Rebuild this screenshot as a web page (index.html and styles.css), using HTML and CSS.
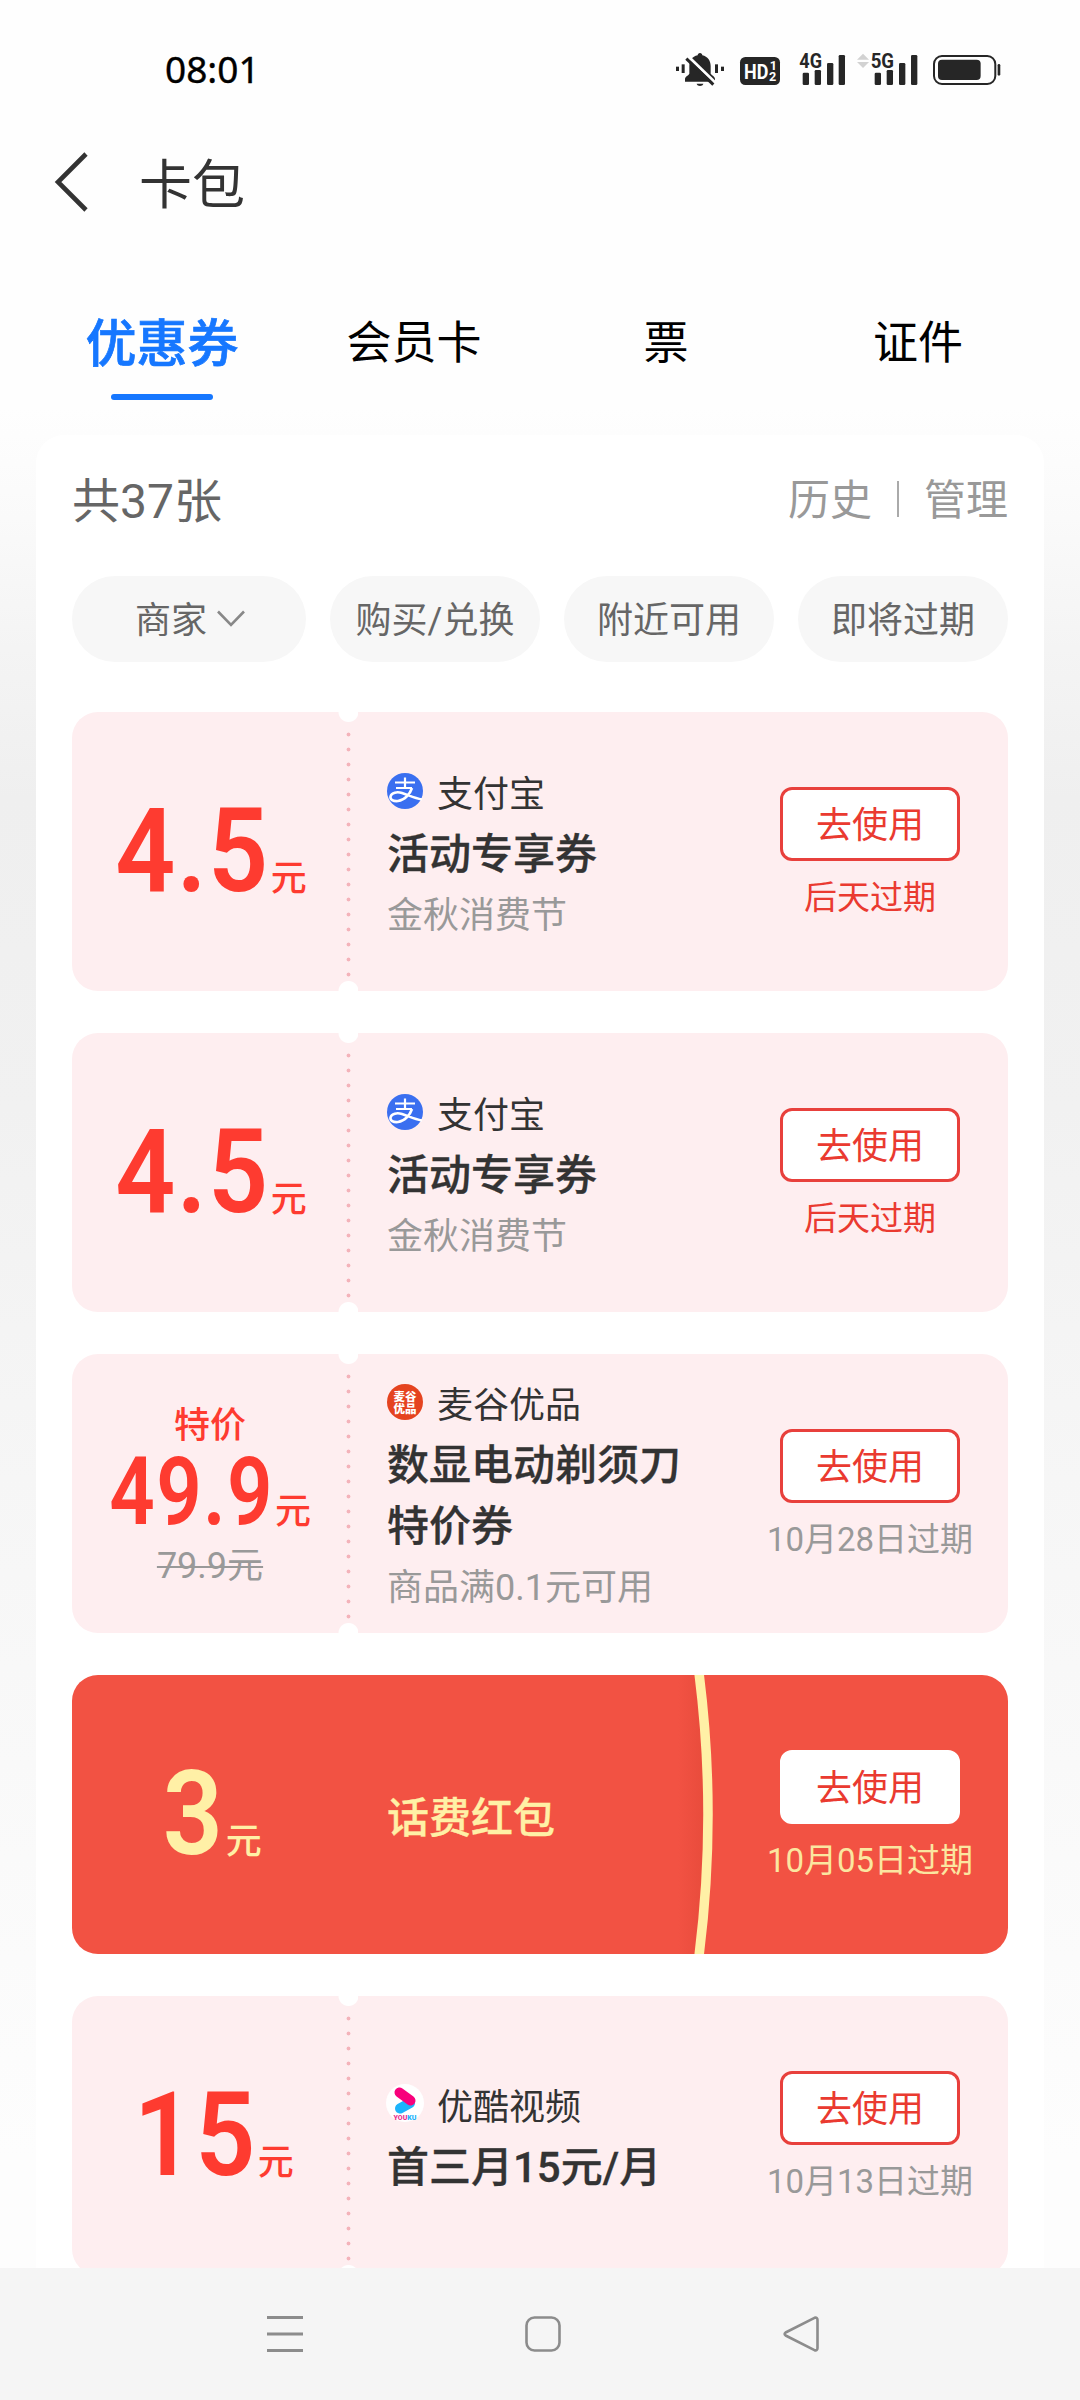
FILE: index.html
```html
<!DOCTYPE html>
<html lang="zh-CN">
<head>
<meta charset="utf-8">
<title>卡包</title>
<link rel="stylesheet" href="styles.css">
</head>
<body>
<div class="screen">
  <header class="top">
    <div class="status">
      <span class="time">08:01</span>
      <div class="status-icons">
        <svg class="ic-bell" viewBox="108 60 144 108" width="48" height="36">
          <g fill="#262626">
            <path d="M180 66c4 0 7 3 7 7 16 4 25 16 25 32v23c4 5 12 8 13 15v9H135v-9c1-7 11-10 13-15v-23c0-16 8-28 25-32 0-4 3-7 7-7z"/>
            <path d="M170 158h20c-2 9-18 9-20 0z"/>
            <rect x="108" y="107" width="9" height="13"/><rect x="125" y="100" width="9" height="26"/>
            <rect x="225" y="100" width="9" height="26"/><rect x="243" y="107" width="9" height="13"/>
          </g>
          <path d="M145 77l82 79" stroke="#fff" stroke-width="9"/>
          <path d="M139 83l81 78" stroke="#262626" stroke-width="9"/>
        </svg>
        <svg class="ic-hd" viewBox="300 60 120 108" width="40" height="36">
          <rect x="300" y="78" width="120" height="84" rx="16" fill="#262626"/>
          <g fill="#fff" font-family="Roboto, sans-serif" font-weight="700">
            <text x="312" y="143" font-size="63" textLength="73" lengthAdjust="spacingAndGlyphs">HD</text>
            <text x="389" y="118" font-size="38">1</text>
            <text x="387" y="151" font-size="38">2</text>
          </g>
        </svg>
        <svg class="ic-4g" viewBox="476 60 140 108" width="46.7" height="36">
          <g fill="#262626">
            <rect x="487" y="125" width="19" height="37" rx="4"/><rect x="523" y="117" width="19" height="45" rx="4"/>
            <rect x="560" y="96" width="19" height="66" rx="4"/><rect x="595" y="72" width="19" height="90" rx="4"/>
            <text x="477" y="110" font-size="60" font-family="Roboto, sans-serif" font-weight="700" textLength="68" lengthAdjust="spacingAndGlyphs">4G</text>
          </g>
        </svg>
        <svg class="ic-5g" viewBox="650 60 182 108" width="60.7" height="36">
          <path d="M650 86l18-18 18 18zM650 93l18 18 18-18z" fill="#d2d2d2"/>
          <g fill="#262626">
            <rect x="703" y="125" width="19" height="37" rx="4"/><rect x="739" y="117" width="19" height="45" rx="4"/>
            <rect x="776" y="96" width="19" height="66" rx="4"/><rect x="812" y="72" width="19" height="90" rx="4"/>
            <text x="691" y="110" font-size="60" font-family="Roboto, sans-serif" font-weight="700" textLength="70" lengthAdjust="spacingAndGlyphs">5G</text>
          </g>
        </svg>
        <svg class="ic-bat" viewBox="878 60 202 108" width="67.3" height="36">
          <rect x="881" y="75" width="184" height="84" rx="24" fill="none" stroke="#262626" stroke-width="6"/>
          <rect x="893" y="86" width="128" height="61" rx="12" fill="#262626"/>
          <rect x="1072" y="99" width="8" height="35" rx="4" fill="#262626"/>
        </svg>
      </div>
    </div>
    <div class="titlebar">
      <svg class="back" viewBox="0 0 34 58" width="34" height="58"><path d="M32 1L4 29l28 28" fill="none" stroke="#333" stroke-width="4.6"/></svg>
      <h1>卡包</h1>
    </div>
    <nav class="tabs">
      <a class="tab active">优惠券</a>
      <a class="tab">会员卡</a>
      <a class="tab">票</a>
      <a class="tab">证件</a>
    </nav>
  </header>

  <main class="content">
    <section class="panel">
      <div class="panel-head">
        <span class="count">共37张</span>
        <div class="links"><a>历史</a><i></i><a>管理</a></div>
      </div>
      <div class="filters">
        <span class="pill wide">商家<svg viewBox="0 0 28 18" width="28" height="18"><path d="M1 1.5l13 13.5 13-13.5" fill="none" stroke="#888" stroke-width="2.6"/></svg></span>
        <span class="pill">购买/兑换</span>
        <span class="pill">附近可用</span>
        <span class="pill">即将过期</span>
      </div>

      <div class="coupons">
        <article class="coupon">
          <div class="price"><div class="amount"><b class="n3">4.5</b><span>元</span></div></div>
          <div class="perf"></div>
          <div class="info">
            <div class="shop">
              <svg class="logo" viewBox="0 0 36 36" width="36" height="36">
                <circle cx="18" cy="18" r="18" fill="#3a6ff0"/>
                <g fill="none" stroke="#fff" stroke-width="2.2">
                  <path d="M8 9.500h20M18 4.500v10.500M9 15h16"/>
                  <path d="M25 15c-2 6-7 12-14 13-5 .5-8-1.500-7.500-4.500C4.500 19.500 10 18.500 15 20c6 1.800 12 5 20 6.500" stroke-width="2.600"/>
                </g>
              </svg>支付宝</div>
            <h2>活动专享券</h2>
            <p>金秋消费节</p>
          </div>
          <div class="action"><a class="btn">去使用</a><span class="due soon">后天过期</span></div>
        </article>

        <article class="coupon">
          <div class="price"><div class="amount"><b class="n3">4.5</b><span>元</span></div></div>
          <div class="perf"></div>
          <div class="info">
            <div class="shop">
              <svg class="logo" viewBox="0 0 36 36" width="36" height="36">
                <circle cx="18" cy="18" r="18" fill="#3a6ff0"/>
                <g fill="none" stroke="#fff" stroke-width="2.2">
                  <path d="M8 9.500h20M18 4.500v10.500M9 15h16"/>
                  <path d="M25 15c-2 6-7 12-14 13-5 .5-8-1.500-7.500-4.500C4.500 19.500 10 18.500 15 20c6 1.800 12 5 20 6.500" stroke-width="2.600"/>
                </g>
              </svg>支付宝</div>
            <h2>活动专享券</h2>
            <p>金秋消费节</p>
          </div>
          <div class="action"><a class="btn">去使用</a><span class="due soon">后天过期</span></div>
        </article>

        <article class="coupon">
          <div class="price special">
            <span class="tag">特价</span>
            <div class="amount"><b>49.9</b><span>元</span></div>
            <del>79.9元</del>
          </div>
          <div class="perf"></div>
          <div class="info">
            <div class="shop">
              <svg class="logo" viewBox="0 0 36 36" width="36" height="36">
                <circle cx="18" cy="18" r="18" fill="#e5431f"/>
                <g fill="#fff" font-family="'Noto Sans CJK SC', sans-serif" font-weight="900" font-size="11.5">
                  <text x="6.500" y="17">麦谷</text><text x="6.500" y="29">优品</text>
                </g>
              </svg>麦谷优品</div>
            <h2>数显电动剃须刀<br>特价券</h2>
            <p>商品满0.1元可用</p>
          </div>
          <div class="action"><a class="btn">去使用</a><span class="due">10月28日过期</span></div>
        </article>

        <article class="coupon packet">
          <svg class="arc" viewBox="0 0 80 279" width="80" height="279">
            <defs><linearGradient id="shade"><stop offset="0" stop-color="#d8402f" stop-opacity="0"/><stop offset="1" stop-color="#d8402f" stop-opacity=".35"/></linearGradient></defs>
            <path d="M34 0H50Q68 139.500 50 279H34z" fill="url(#shade)"/>
            <path d="M55 -2Q73 139.500 55 281" fill="none" stroke="#fff0a6" stroke-width="9.500"/>
          </svg>
          <div class="price"><div class="amount"><b class="n1">3</b><span>元</span></div></div>
          <div class="perf"></div>
          <div class="info"><h2>话费红包</h2></div>
          <div class="action"><a class="btn">去使用</a><span class="due">10月05日过期</span></div>
        </article>

        <article class="coupon">
          <div class="price"><div class="amount"><b class="n2">15</b><span>元</span></div></div>
          <div class="perf"></div>
          <div class="info two-line">
            <div class="shop">
              <svg class="logo" viewBox="0 0 36 36" width="36" height="36">
                <circle cx="18" cy="17" r="19" fill="#fff"/>
                <path d="M13 22.500L23 17" stroke="#1cb4fb" stroke-width="10" stroke-linecap="round"/>
                <path d="M12.500 6.500L23.500 14.500" stroke="#f8017c" stroke-width="10" stroke-linecap="round"/>
                <text x="6.500" y="34" font-family="Roboto, sans-serif" font-size="7" font-weight="900" fill="#e8338f">YOU<tspan fill="#1cb4fb">KU</tspan></text>
              </svg>优酷视频</div>
            <h2>首三月15元/月</h2>
          </div>
          <div class="action"><a class="btn">去使用</a><span class="due">10月13日过期</span></div>
        </article>
      </div>
    </section>
  </main>

  <footer class="navbar">
    <svg viewBox="0 0 36 36" width="36" height="36"><path d="M0 1.500h36M0 18h36M0 34.500h36" stroke="#8c8c8c" stroke-width="3"/></svg>
    <svg viewBox="0 0 36 36" width="36" height="36"><rect x="1.500" y="1.500" width="33" height="33" rx="8" fill="none" stroke="#8c8c8c" stroke-width="2.600"/></svg>
    <svg viewBox="0 0 36 36" width="36" height="36"><path d="M31.500 1.800L2.600 16.500q-2 1.500 0 3L31.500 34.200q3 .8 3-2.200V4q0-3-3-2.200z" fill="none" stroke="#8c8c8c" stroke-width="2.600" stroke-linejoin="round"/></svg>
  </footer>
</div>
</body>
</html>
```
FILE: styles.css
```css
* { box-sizing: border-box; }
body {
  margin: 0;
  font-family: Roboto, "Noto Sans CJK SC", sans-serif;
  color: #333;
}
h1, h2, p { margin: 0; font-weight: 400; }
svg { display: block; flex: none; overflow: visible; }

.screen {
  width: 1080px;
  height: 2400px;
  display: flex;
  flex-direction: column;
  overflow: hidden;
  background: #fff;
}

/* header */
.top { height: 408px; flex: none; background: #fefefe; }
.status {
  height: 138px;
  padding: 0 80px 0 165px;
  display: flex;
  justify-content: space-between;
  align-items: center;
}
.time {
  font-family: "Noto Sans", Roboto, sans-serif;
  font-size: 37px;
  font-weight: 400;
  color: #000;
  padding-bottom: 2px;
  -webkit-text-stroke: .4px #000;
}
.status-icons { display: flex; align-items: center; padding-bottom: 1px; }
.ic-bell { margin-right: 16px; }
.ic-hd { margin-right: 18.700px; }
.ic-4g { margin-right: 11.300px; }
.ic-5g { margin-right: 15.300px; }

.titlebar {
  height: 88px;
  padding-left: 54px;
  display: flex;
  align-items: center;
  gap: 51px;
}
.titlebar h1 { font-size: 53px; line-height: 88px; padding-top: 8px; height: 96px; }

.tabs { display: flex; padding: 81px 36px 0; }
.tab {
  width: 252px;
  height: 100px;
  font-size: 45px;
  line-height: 73px;
  text-align: center;
  color: #000;
}
.tab.active {
  font-size: 51px;
  line-height: 75px;
  font-weight: 500;
  color: #1677ff;
  -webkit-text-stroke: .7px #1677ff;
}
.tab.active::after {
  content: "";
  display: block;
  width: 102px;
  height: 6px;
  margin: 12px auto 0;
  border-radius: 3px;
  background: #1677ff;
}

/* body */
.content {
  flex: 1;
  min-height: 0;
  overflow: hidden;
  padding: 27px 36px 0;
  background: linear-gradient(#fefefe 0, #fafafa 110px, #f4f4f4 240px, #efefef 390px, #f1f1f1 700px, #f6f6f6 1070px, #fafafa 1450px, #fdfdfd 1750px);
}
.panel {
  height: 2000px;
  padding: 0 36px;
  border-radius: 28px;
  background: #fff;
}
.panel-head {
  height: 128px;
  display: flex;
  align-items: center;
  justify-content: space-between;
}
.count { font-size: 48px; color: #666; padding-bottom: 5px; }
.links { display: flex; align-items: center; font-size: 42px; color: #999; }
.links a { padding-bottom: 5px; }
.links i { width: 2px; height: 36px; margin: 0 25px; background: #aaa; }

.filters { display: flex; gap: 24px; margin-top: 13px; }
.pill {
  flex: 1;
  height: 86px;
  padding-bottom: 5px;
  display: flex;
  align-items: center;
  justify-content: center;
  border-radius: 43px;
  font-size: 36px;
  white-space: nowrap;
  color: #666;
  background: #f7f7f7;
}
.pill.wide { flex: 0 0 234px; gap: 10px; padding-left: 2px; }
.pill.wide svg { margin-top: 5px; }

/* coupons */
.coupons { display: flex; flex-direction: column; gap: 42px; margin-top: 50px; }
.coupon {
  position: relative;
  height: 279px;
  display: flex;
  align-items: center;
  border-radius: 26px;
  overflow: hidden;
  background: #feeef0;
}
.price {
  width: 276px;
  padding-bottom: 2px;
  padding-left: 2px;
  display: flex;
  flex-direction: column;
  align-items: center;
  color: #fe3b30;
}
.amount { display: flex; align-items: baseline; }
.amount b {
  font-size: 117px;
  font-weight: 600;
  line-height: 120px;
  letter-spacing: 1.500px;
  transform: scaleX(.9);
  transform-origin: right;
}
/* the negative margin takes back the width lost to the horizontal scale */
.amount .n1 { margin-left: -4px; }
.amount .n2 { margin-left: -8px; }
.amount .n3 { margin-left: -17px; }
.amount span { font-size: 36px; font-weight: 500; line-height: 36px; margin-left: 1px; }

.price.special { padding: 12px 0 0; }
.special .amount b {
  font-size: 95px;
  line-height: 84px;
  margin-left: -31px;
  transform: scaleX(.84);
}
.special .tag { font-size: 36px; font-weight: 500; line-height: 48px; }
.special del { font-size: 36px; line-height: 64px; color: #999; text-decoration-thickness: 2px; }

/* perforation: two notches and a dotted line */
.perf {
  width: 20px;
  margin-left: -10px;
  align-self: stretch;
  background:
    radial-gradient(circle at 10.500px 0, #fff 9.500px, transparent 10.500px),
    radial-gradient(circle at 10.500px 279px, #fff 9.500px, transparent 10.500px),
    radial-gradient(circle at 10.500px 7.500px, #f4b3ba 1.500px, transparent 2.300px) 0 15px / 20px 15px repeat-y;
}
.info {
  width: 422px;
  padding-left: 29px;
  padding-top: 7px;
}
.info.two-line { padding-top: 3px; }
.shop {
  display: flex;
  align-items: center;
  gap: 14px;
  height: 60px;
  padding-bottom: 6px;
  font-size: 36px;
}
.info h2 { font-size: 42px; font-weight: 500; line-height: 61px; -webkit-text-stroke: .3px currentColor; }
.info p { font-size: 36px; line-height: 62px; color: #999; }

.action { width: 180px; display: flex; flex-direction: column; align-items: center; padding-top: 7px; }
.btn {
  width: 180px;
  height: 74px;
  border: 3px solid #e8403c;
  border-radius: 12px;
  background: #fff;
  font-size: 36px;
  line-height: 73px;
  text-align: center;
  color: #ea3a30;
}
.due { margin-top: 12px; font-size: 33px; line-height: 50px; white-space: nowrap; color: #999; }
.due.soon { color: #ea3a30; }

.packet { background: #f25243; }
.packet .arc { position: absolute; left: 572px; top: 0; overflow: hidden; }
.packet .price, .packet .info h2 { color: #fff0a6; }
.packet .perf { background: none; }
.packet .btn { border-color: #fff; }
.packet .due { color: #fbe6a0; }

/* system navigation */
.navbar {
  height: 132px;
  flex: none;
  display: flex;
  justify-content: center;
  gap: 222px;
  padding-top: 48px;
  padding-left: 6px;
  background: #f5f5f5;
}
```
